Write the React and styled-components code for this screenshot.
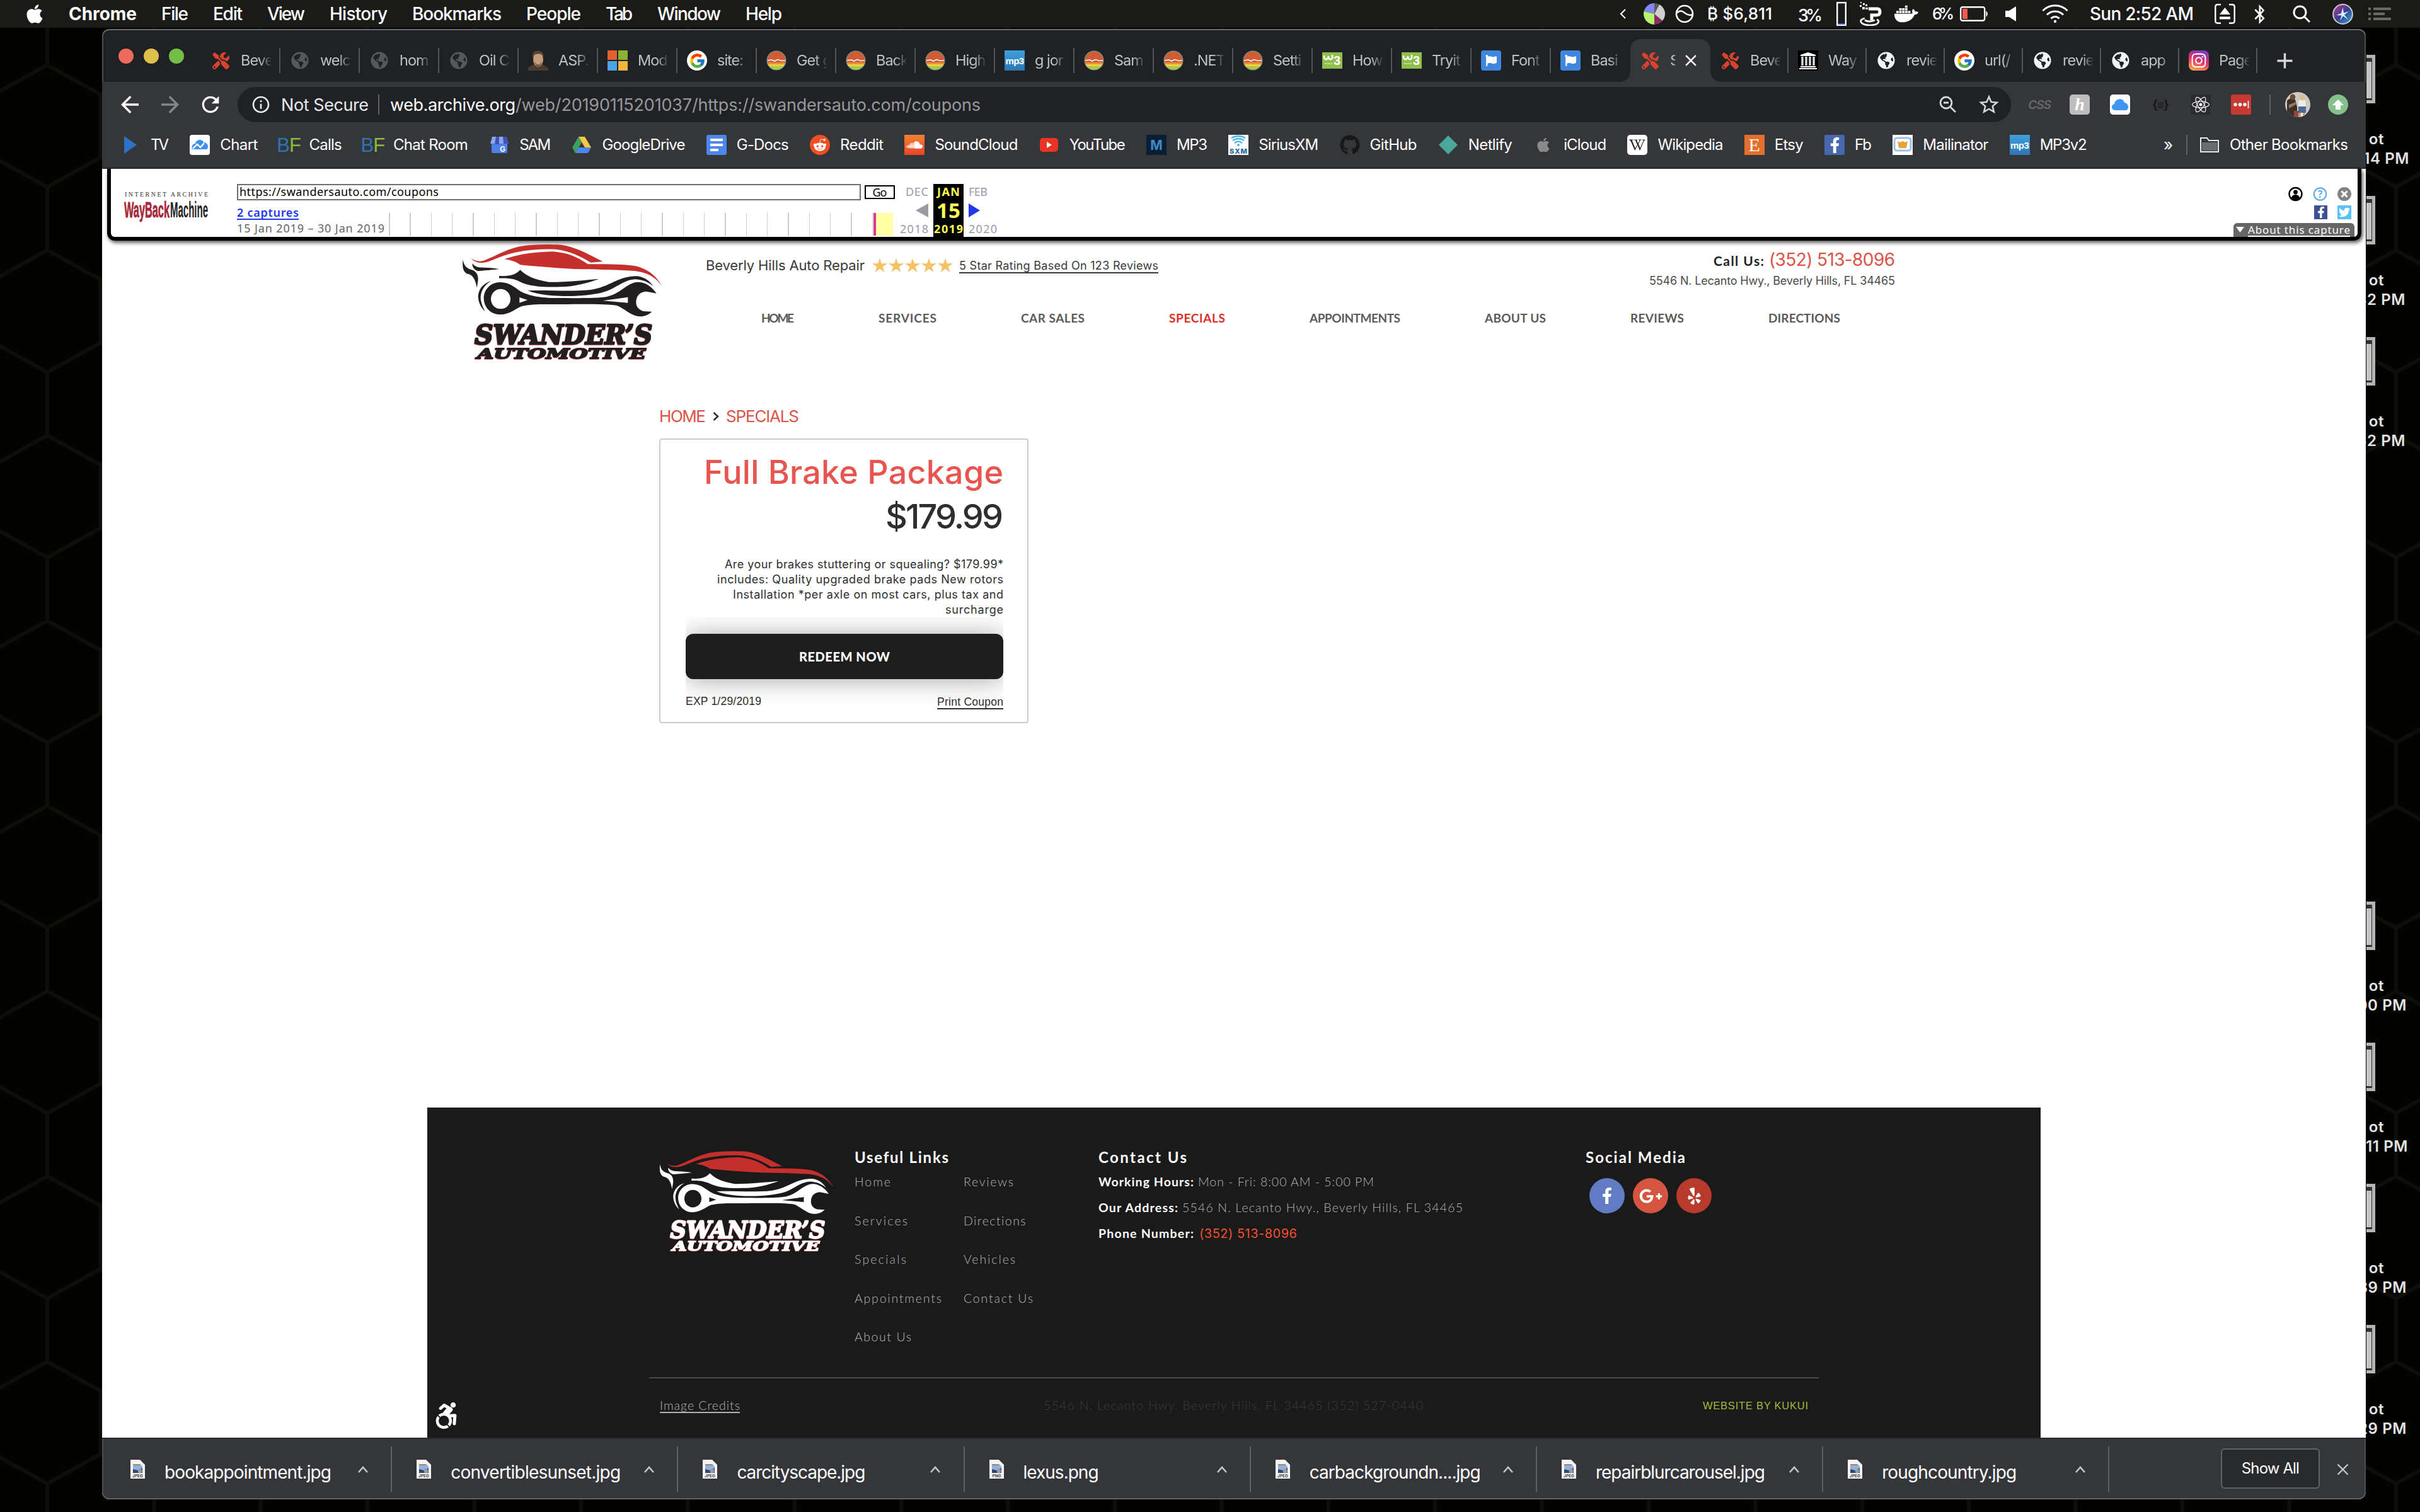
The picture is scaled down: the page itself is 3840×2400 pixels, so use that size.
import React, { useLayoutEffect, useRef, useState } from "react";
import styled, { createGlobalStyle, css } from "styled-components";
import {
  FaApple, FaTools, FaGlobeAmericas, FaRedditAlien, FaSoundcloud, FaGithub,
  FaWikipediaW, FaFacebookF, FaInstagram, FaDocker, FaBluetoothB, FaReact, FaTwitter,
  FaYelp, FaGooglePlusG, FaAccessibleIcon, FaFlag,
} from "react-icons/fa";
import {
  MdArrowBack, MdArrowForward, MdRefresh, MdInfoOutline, MdStarBorder, MdAdd, MdClose,
} from "react-icons/md";
import { FcGoogle } from "react-icons/fc";

const ui = `Inter, Roboto, sans-serif`;
const geo = `Inter, "Open Sans", sans-serif`;
const soft = `Lato, "Open Sans", sans-serif`;
const lucida = `"Noto Sans", "DejaVu Sans", sans-serif`;
const arial = `"Liberation Sans", Arial, sans-serif`;

const Global = createGlobalStyle`
  *, *::before, *::after { box-sizing: border-box; }
  body { margin: 0; background: #000; font-family: ${ui}; }
  svg { display: block; flex: none; }
`;

/* ---------- text ---------- */

const TextBox = styled.span`
  display: inline-block;
  flex: none;
  width: ${(p) => p.$w}px;
  margin-left: ${(p) => p.$ml || 0}px;
  margin-top: ${(p) => p.$mt || 0}px;
  font-family: ${(p) => p.$font || ui};
  font-size: ${(p) => p.$size}px;
  font-weight: ${(p) => p.$weight || 400};
  color: ${(p) => p.$color || "#fff"};
  line-height: ${(p) => p.$line || p.$size}px;
  white-space: pre;
  ${(p) => p.$rule && css`border-bottom: 2px solid currentColor;`}
`;

// A label that tracks its letters so the word fills the given width.
function Label({ children, ...rest }) {
  const ref = useRef(null);
  const [spacing, setSpacing] = useState(0);
  useLayoutEffect(() => {
    const el = ref.current;
    el.style.letterSpacing = "0px";
    const natural = el.getBoundingClientRect().width;
    const next = (rest.$w - natural) / Math.max(1, String(children).length - 1);
    el.style.letterSpacing = `${next}px`;
    setSpacing(next);
  }, [children, rest.$w, rest.$size]);
  return (
    <TextBox {...rest}>
      <span ref={ref} style={{ letterSpacing: `${spacing}px` }}>{children}</span>
    </TextBox>
  );
}

const Slot = styled.div`
  display: flex;
  flex: none;
  align-items: center;
  justify-content: center;
  width: ${(p) => p.$w}px;
  height: ${(p) => p.$h || p.$w}px;
  margin-left: ${(p) => p.$ml || 0}px;
  color: ${(p) => p.$color || "#fff"};
  background: ${(p) => p.$bg || "none"};
  border-radius: ${(p) => p.$r || 0}px;
`;

const Divider = styled.div`
  flex: none;
  width: 2px;
  height: ${(p) => p.$h}px;
  margin-left: ${(p) => p.$ml || 0}px;
  background: #5f6166;
`;

const Spacer = styled.div`flex: 1;`;

/* ---------- desktop ---------- */

const Desktop = styled.div`
  position: relative;
  width: 3840px;
  height: 2400px;
  overflow: hidden;
  background: #030301;
`;
const Wallpaper = styled.svg`
  position: absolute;
  inset: 0;
`;
const Screen = styled.div`
  position: relative;
  display: grid;
  grid-template-rows: 44px 1fr;
  height: 100%;
`;
const MenuBar = styled.div`
  display: flex;
  align-items: center;
  padding: 0 46px 0 42px;
  background: #1a1a19;
`;
const MenuItems = styled.div`
  display: flex;
  align-items: center;
  gap: 39px;
  margin-left: 41px;
`;
const Workspace = styled.div`
  display: grid;
  grid-template-columns: 162px 3592px 86px;
`;
const Files = styled.div`
  padding-top: 43px;
  overflow: hidden;
`;
const FileItem = styled.div`
  height: 224px;
  padding-left: 1px;
  visibility: ${(p) => (p.$empty ? "hidden" : "visible")};
`;
const Thumb = styled.div`
  width: 14px;
  height: 77px;
  margin-bottom: 41px;
  background: #c3c4c4;
  border: 5px solid #b4b5b5;
  border-left: 0;
  box-shadow: inset 0 6px 0 #333, inset 0 -3px 0 #333, inset -1px 0 0 #333;
`;
const FileLabel = styled.div`
  display: flex;
  justify-content: flex-end;
  width: ${(p) => p.$w}px;
  font-size: 24px;
  font-weight: 600;
  letter-spacing: 0.6px;
  line-height: 31px;
  white-space: pre;
  color: #e2e2e2;
`;

/* ---------- browser ---------- */

const Window = styled.div`
  display: flex;
  flex-direction: column;
  width: 3592px;
  height: 2334px;
  margin-top: 2px;
  border-radius: 12px;
  overflow: hidden;
  background: #fff;
`;
const Head = styled.div`
  flex: none;
  height: 222px;
  background: #35363a;
  border-bottom: 2px solid #28292b;
`;
const TabStrip = styled.div`
  display: flex;
  align-items: flex-end;
  height: 84px;
  padding-left: 26px;
  background: #202124;
  border-radius: 12px 12px 0 0;
  box-shadow: inset 0 2px 0 #6a6b6d, inset 2px 0 0 #4b4c4f, inset -2px 0 0 #4b4c4f;
`;
const Lights = styled.div`
  display: flex;
  gap: 16px;
  margin: 0 27px 29px 0;
`;
const Light = styled.i`
  width: 24px;
  height: 24px;
  border-radius: 50%;
  background: ${(p) => p.$c};
`;
const Tab = styled.div`
  position: relative;
  display: flex;
  flex: none;
  align-items: center;
  width: ${(p) => p.$w}px;
  height: 68px;
  padding-left: 15px;
  ${(p) => p.$sep && css`
    background: linear-gradient(#55565a, #55565a) right center / 2px 40px no-repeat;
  `}
  ${(p) => p.$active && css`
    background: #35363a;
    border-radius: 16px 16px 0 0;
    &::before, &::after {
      content: "";
      position: absolute;
      bottom: 0;
      width: 16px;
      height: 16px;
    }
    &::before { left: -16px; background: radial-gradient(circle at 0 0, transparent 15.5px, #35363a 16px); }
    &::after { right: -16px; background: radial-gradient(circle at 100% 0, transparent 15.5px, #35363a 16px); }
  `}
`;
const TabTitle = styled.span`
  width: ${(p) => p.$w || 48}px;
  margin-left: 16px;
  overflow: hidden;
  font-size: 23.5px;
  line-height: 32px;
  letter-spacing: -1px;
  white-space: pre;
  color: #bdc1c6;
  mask-image: linear-gradient(90deg, #000 62%, transparent 104%);
`;
const Toolbar = styled.div`
  display: flex;
  align-items: center;
  height: 72px;
  padding-left: 23px;
`;
const Omnibox = styled.div`
  display: flex;
  align-items: center;
  width: 2814px;
  height: 56px;
  margin-left: 23px;
  padding: 0 16px 0 21px;
  border-radius: 28px;
  background: #202124;
`;
const Url = styled.div`
  display: flex;
  margin-left: 17px;
`;
const Bookmarks = styled.div`
  display: flex;
  align-items: center;
  height: 56px;
  padding: 0 28px 0 29px;
`;
const BookmarkList = styled.div`
  display: flex;
  gap: 33.3px;
`;
const Bookmark = styled.div`
  display: flex;
  align-items: center;
  gap: 16px;
`;
const Mono = styled.span`
  font-family: ${(p) => p.$font || ui};
  font-size: ${(p) => p.$size}px;
  font-weight: ${(p) => p.$weight || 700};
  font-style: ${(p) => p.$style || "normal"};
  letter-spacing: ${(p) => p.$ls || 0}px;
  line-height: 1;
  color: ${(p) => p.$color || "#fff"};
`;

/* ---------- wayback banner ---------- */

const Page = styled.div`
  display: flex;
  flex: 1;
  flex-direction: column;
`;
const Banner = styled.div`
  display: flex;
  flex: none;
  width: 3577px;
  height: 114px;
  margin-left: 8px;
  border: 6px solid #000;
  border-top: 0;
  border-radius: 0 0 12px 12px;
  box-shadow: 2px 3px 6px rgba(0, 0, 0, 0.7);
`;
const BannerLogo = styled.svg`
  margin: 34px 0 0 21px;
`;
const CaptureBlock = styled.div`
  width: 1044px;
  margin-left: 45px;
  padding-top: 24px;
`;
const CaptureRow = styled.div`
  display: flex;
  align-items: center;
  height: 26px;
`;
const UrlField = styled.div`
  display: flex;
  align-items: center;
  width: 990px;
  height: 26px;
  padding-left: 2px;
  border: 2px solid #6e6e6e;
`;
const GoButton = styled.div`
  display: flex;
  align-items: center;
  justify-content: center;
  width: 48px;
  height: 22px;
  margin-left: 6px;
  border: 2px solid #000;
`;
const Timeline = styled.div`
  display: flex;
  margin-top: 8px;
`;
const Captures = styled.div`
  display: grid;
  grid-template-rows: 24px 24px;
  align-items: center;
  width: 241px;
`;
const Sparkline = styled.div`
  display: flex;
  justify-content: flex-end;
  width: 800px;
  height: 36px;
  margin-top: 12px;
  background: repeating-linear-gradient(90deg, #ccc 0 1.5px, transparent 1.5px 33.33px);
`;
const YearMark = styled.i`
  width: 31px;
  border-left: 4px solid #e0358a;
  background: #ffffa5;
`;
const Calendar = styled.div`
  display: grid;
  grid-template-columns: 54px 48px 54px;
  grid-template-rows: 23px 37px 24px;
  height: 84px;
  margin: 24px 0 0 7px;
`;
const Cell = styled.div`
  display: flex;
  align-items: center;
  justify-content: ${(p) => p.$at || "center"};
  padding: 0 8px;
  background: ${(p) => (p.$now ? "#000" : "none")};
`;
const BannerTools = styled.div`
  display: flex;
  flex-direction: column;
  align-items: flex-end;
  margin-right: 5px;
  padding-top: 28px;
`;
const ToolRow = styled.div`
  display: flex;
  align-items: center;
  gap: 16px;
  height: ${(p) => p.$h}px;
  margin-bottom: ${(p) => p.$mb || 0}px;
  padding-right: 5px;
`;
const AboutTab = styled.div`
  display: flex;
  align-items: center;
  width: 192px;
  height: 22px;
  padding-left: 4px;
  border-radius: 6px 6px 0 0;
  background: #666;
`;

/* ---------- site ---------- */

const SiteHeader = styled.header`
  display: flex;
  height: 198px;
  padding: 4px 0 0 562px;
`;
const HeaderBody = styled.div`
  width: 1887px;
  margin-left: 60px;
`;
const HeaderTop = styled.div`
  display: flex;
  justify-content: space-between;
  height: 74px;
`;
const Rating = styled.div`
  display: flex;
  align-items: center;
  height: 70px;
`;
const Stars = styled.div`
  display: flex;
  gap: 2px;
  margin: 0 10px 0 12px;
`;
const CallUs = styled.div`
  display: flex;
  flex-direction: column;
  align-items: flex-end;
  padding-top: 6px;
`;
const CallLine = styled.div`
  display: flex;
  align-items: center;
  height: ${(p) => p.$h}px;
`;
const Nav = styled.nav`
  display: flex;
  align-items: center;
  gap: 134px;
  height: 24px;
  margin: 32px 0 0 88px;
`;
const Crumbs = styled.div`
  display: flex;
  align-items: center;
  gap: 11px;
  height: 30px;
  margin: 66px 0 20px 884px;
`;
const Card = styled.div`
  display: flex;
  flex: none;
  flex-direction: column;
  align-items: flex-end;
  width: 586px;
  height: 452px;
  margin-left: 884px;
  padding: 18px 38px 0 40px;
  border: 2px solid #ccc;
  border-radius: 4px;
`;
const Description = styled.div`
  display: flex;
  flex-direction: column;
  align-items: flex-end;
  margin: 30px 0 26px;
`;
const ButtonWrap = styled.div`
  width: 100%;
  clip-path: inset(-26px 0 -44px 0);
`;
const RedeemButton = styled.div`
  display: flex;
  align-items: center;
  justify-content: center;
  height: 72px;
  border-radius: 12px;
  background: #1e1e1e;
  box-shadow: 0 2px 40px rgba(0, 0, 0, 0.35);
`;
const CardFoot = styled.div`
  display: flex;
  align-items: center;
  justify-content: space-between;
  width: 100%;
  height: 24px;
  margin-top: 24px;
`;

const SiteFooter = styled.footer`
  position: relative;
  display: flex;
  flex-direction: column;
  width: 2560px;
  height: 524px;
  margin: auto 0 0 516px;
  background: #1a1a1a;
`;
const FooterColumns = styled.div`
  display: flex;
  height: 428px;
  padding: 64px 0 0 360px;
`;
const FooterLogo = styled.div`
  padding-top: 3px;
`;
const FooterColumn = styled.div`
  width: ${(p) => p.$w}px;
  margin-left: ${(p) => p.$ml || 0}px;
`;
const Links = styled.div`
  display: grid;
  grid-template-columns: 173px 173px;
  grid-template-rows: repeat(5, 24px);
  grid-auto-flow: column;
  align-items: center;
  row-gap: 37.5px;
  margin-top: 12px;
`;
const ContactLines = styled.div`
  display: flex;
  flex-direction: column;
  gap: 17px;
  margin-top: 12px;
`;
const ContactLine = styled.div`
  display: flex;
  align-items: center;
  height: 24px;
`;
const Social = styled.div`
  display: flex;
  gap: 13px;
  margin: 18px 0 0 6px;
`;
const FooterBase = styled.div`
  display: flex;
  align-items: center;
  width: 1856px;
  height: 88px;
  margin-left: 352px;
  padding: 0 17px;
  border-top: 2px solid #4a4a4a;
`;
const Accessible = styled.div`
  position: absolute;
  left: 9px;
  bottom: 14px;
  color: #fff;
`;

/* ---------- downloads ---------- */

const DownloadBar = styled.div`
  display: flex;
  flex: none;
  align-items: center;
  height: 98px;
  padding-left: 6px;
  background: #35363a;
  border-top: 2px solid #28292b;
  border-radius: 0 0 12px 12px;
  box-shadow: inset 0 -2px 0 #606164, inset 2px 0 0 #4b4c4f, inset -2px 0 0 #4b4c4f;
`;
const Download = styled.div`
  display: flex;
  align-items: center;
  width: 454.2px;
  height: 72px;
  padding-left: 39px;
  border-right: 2px solid #606164;
`;
const DownloadName = styled.div`
  display: flex;
  width: 306px;
  margin: 9px 0 0 31px;
`;
const ShowAll = styled.div`
  display: flex;
  align-items: center;
  justify-content: center;
  width: 157px;
  height: 64px;
  margin: 0 0 2px 177px;
  border: 2px solid #5f6368;
  border-radius: 6px;
  background: #292a2d;
`;

/* ---------- drawings ---------- */

function Hexagons() {
  return (
    <Wallpaper width="3840" height="2400">
      <defs>
        <pattern id="hex" width="169.4" height="294" patternUnits="userSpaceOnUse" x="75" y="103">
          <path
            d="M0 0L84.7 47L169.4 0M84.7 47V147M0 194L84.7 147L169.4 194M0 194V294M169.4 194V294"
            fill="none" stroke="#100e0a" strokeWidth="6"
          />
        </pattern>
      </defs>
      <rect width="3840" height="2400" fill="url(#hex)" />
    </Wallpaper>
  );
}

const LogoWords = styled.g`
  font-family: "DejaVu Serif", "Liberation Serif", serif;
  font-weight: 700;
  font-style: italic;
  stroke-linejoin: round;
  filter: drop-shadow(-1px 2px 0 #d03430);
`;

function CarLogo({ width, height, ink }) {
  return (
    <svg width={width} height={height} viewBox="0 30 1008 582">
      <g fill="#c5302c">
        <path d="M70 103C95 118 112 118 130 113C190 92 230 62 300 46C360 36 420 34 500 38C570 48 620 78 698 118L640 122C590 92 540 68 480 60C420 56 350 60 280 74C220 88 180 108 145 120C115 128 88 122 70 103Z" />
        <path d="M230 106C290 84 360 72 460 70C530 76 570 92 626 130C700 130 780 130 830 136C900 142 950 180 980 236C950 192 910 170 850 162C780 158 680 155 600 154C500 152 400 142 304 133C285 118 265 112 230 106Z" />
      </g>
      <g fill={ink}>
        <path d="M32 108C36 140 52 152 78 158C100 168 104 185 104 205L98 243C92 210 84 188 62 178C36 176 26 150 32 108Z" />
        <path d="M77 127C92 146 110 146 130 146C160 146 185 150 205 153C170 158 130 160 104 163C90 160 74 145 77 127Z" />
        <path d="M204 186C250 188 280 184 304 157C330 184 370 204 440 215C520 216 610 206 680 200C620 222 560 236 500 238C420 240 350 238 300 212C275 200 250 196 204 197Z" />
        <path d="M340 256C430 252 540 262 640 252C730 240 770 186 860 187C900 190 925 215 938 235C912 215 890 204 850 202C790 206 760 250 690 266C600 286 480 286 400 272C375 268 355 262 340 256Z" />
        <path d="M165 211C130 220 104 250 104 285C106 315 118 338 137 354C124 330 116 310 116 285C118 255 135 228 165 211Z" />
        <path
          fillRule="evenodd"
          d="M208 216C240 216 262 228 290 248C330 280 400 291 480 291C580 292 680 292 720 284C780 270 800 232 850 217C890 208 930 235 953 269L905 260C870 262 856 285 856 312C856 332 868 346 890 354L931 356C915 372 895 379 872 379C830 376 800 340 765 327C700 318 600 321 500 321C430 321 360 318 312 330C280 342 255 370 208 370C165 370 131 336 131 292C131 250 165 216 208 216ZM211 248C185 248 165 269 165 296C165 322 185 343 211 343C238 343 258 322 258 296C258 269 238 248 211 248ZM301 288L339 301L301 314ZM817 287L698 304L817 314Z"
        />
      </g>
      <LogoWords fill={ink} stroke={ink}>
        <text x="88" y="511" fontSize="128" textLength="846" lengthAdjust="spacingAndGlyphs" strokeWidth="8">SWANDER’S</text>
        <text x="100" y="580" fontSize="69" textLength="802" lengthAdjust="spacingAndGlyphs" strokeWidth="5.5">AUTOMOTIVE</text>
      </LogoWords>
    </svg>
  );
}

const Sunset = () => (
  <svg width="32" height="32" viewBox="0 0 32 32">
    <defs><clipPath id="sun"><circle cx="16" cy="16" r="14.5" /></clipPath></defs>
    <circle cx="16" cy="16" r="15.5" fill="#6e9f9a" />
    <g clipPath="url(#sun)">
      <rect width="32" height="32" fill="#cf5c35" />
      <rect y="19" width="32" height="3" fill="#e6903c" />
      <rect y="22" width="32" height="3" fill="#f4d03f" />
      <rect y="25" width="32" height="7" fill="#a9c94b" />
      <path d="M2 16L9 15L13 17L18 14.5L24 16.5L30 16" stroke="#fff" strokeWidth="1.6" fill="none" />
    </g>
  </svg>
);
const Portrait = () => (
  <svg width="32" height="32" viewBox="0 0 32 32">
    <path d="M0 32V27L9 22L22 22L32 28V32Z" fill="#4b3c31" />
    <ellipse cx="16" cy="14" rx="8" ry="12" fill="#c59c7c" />
    <path d="M7 12C6 2 11 0 17 1C23 1 26 6 24 13L22 7C18 5 13 5 9 8Z" fill="#5c4330" />
    <path d="M10 17Q16 28 22 17Q20 27 16 27Q12 27 10 17Z" fill="#7b5a45" />
  </svg>
);
const Squares = () => (
  <svg width="32" height="32">
    <rect width="15" height="15" fill="#e3602f" /><rect x="17" width="15" height="15" fill="#8bb331" />
    <rect y="17" width="15" height="15" fill="#4da3e8" /><rect x="17" y="17" width="15" height="15" fill="#f0b53c" />
  </svg>
);
const Temple = () => (
  <svg width="32" height="32" viewBox="0 0 32 32">
    <rect width="32" height="32" fill="#000" />
    <path d="M4 7L16 3L28 7V9H4ZM4 25H28V27H4ZM2 28H30V30H2Z" fill="#fff" />
    <path d="M7 10V24M13 10V24M19 10V24M25 10V24" stroke="#ddd" strokeWidth="3.4" />
  </svg>
);
const Drive = () => (
  <svg width="32" height="32" viewBox="0 0 32 32">
    <path d="M11 3L21 3L31 20L21 20Z" fill="#f6c944" />
    <path d="M11 3L16 12L6 29L1 20Z" fill="#3f9f5c" />
    <path d="M11 20L31 20L26 29L6 29Z" fill="#4d86ec" />
  </svg>
);
const Docs = () => (
  <svg width="32" height="32">
    <rect width="32" height="32" rx="3" fill="#4d86ec" />
    <path d="M6 8H26M6 16H26M6 24H19" stroke="#fff" strokeWidth="4" />
  </svg>
);
const Shop = () => (
  <svg width="32" height="32">
    <rect x="4" y="12" width="25" height="17" rx="2" fill="#4d7fe6" />
    <path d="M5 3H28L31 14H2Z" fill="#88a7f1" />
    <path d="M11 3H16V15H9ZM22 3H28L31 14H23Z" fill="#4351b0" />
    <text x="17" y="27" fontSize="12" fontWeight="700" fill="#fff" fontFamily="Inter, sans-serif">G</text>
  </svg>
);
const ChartIcon = () => (
  <svg width="32" height="32">
    <rect width="32" height="32" rx="4" fill="#fff" />
    <path d="M4 23C2 17 6 14 9 14C10 7 20 6 22 12C29 12 31 20 27 23Z" fill="#3d8ff0" />
    <path d="M5 22L12 15L17 20L23 13" stroke="#fff" strokeWidth="2.4" fill="none" />
  </svg>
);
const Bf = () => (
  <Slot $w={32}><Mono $size={31} $weight={400} $color="#3173b7" $ls={-1} $font={arial}>B</Mono><Mono $size={31} $weight={400} $color="#8abb3f" $font={arial}>F</Mono></Slot>
);
const Mp3 = () => (
  <Slot $w={32} $bg="linear-gradient(#3fa0dc, #2c77b4)"><Mono $size={15} $ls={-0.6} $font={arial}>mp3</Mono></Slot>
);
const W3 = () => (
  <svg width="32" height="26">
    <rect width="32" height="26" fill="#8fbf4b" />
    <path d="M3 6Q3 12 7 11Q10 10 10 6Q10 12 14 11Q17 10 16 5" fill="none" stroke="#fff" strokeWidth="2.6" strokeLinecap="round" />
    <text x="18" y="20" fontSize="20" fill="#fff" fontWeight="700" fontFamily="Liberation Sans, sans-serif">3</text>
    <path d="M4 18H16" stroke="#d9ebc0" strokeWidth="2" strokeDasharray="1.5 1" />
  </svg>
);
const FlagIcon = () => <Slot $w={32} $bg="#3f87de" $r={4}><FaFlag size={18} /></Slot>;
const Goog = () => <Slot $w={32} $bg="#fff" $r={16}><FcGoogle size={27} /></Slot>;
const Tools = () => <Slot $w={32} $color="#d8432e"><FaTools size={27} /></Slot>;
const Globe = ({ c }) => <Slot $w={32} $color={c}><FaGlobeAmericas size={28} /></Slot>;
const Insta = () => (
  <Slot $w={32} $r={8} $bg="linear-gradient(20deg, #fcb045 5%, #e1306c 50%, #6a3fc9 95%)"><FaInstagram size={26} /></Slot>
);
const Sirius = () => (
  <Slot $w={32} $bg="#fff">
    <svg width="32" height="32">
      <path d="M5 5Q16 -1 27 5M7 9Q16 3 25 9M10 13Q16 8 22 13" stroke="#52b4e4" strokeWidth="2.6" fill="none" />
      <circle cx="16" cy="16" r="2" fill="#52b4e4" />
      <text x="2" y="30" fontSize="11" fontWeight="800" fill="#24689b" fontFamily="Inter, sans-serif" textLength="28">SXM</text>
    </svg>
  </Slot>
);
const Mail = () => (
  <svg width="32" height="32">
    <rect width="32" height="32" fill="#fff" />
    <rect x="3" y="5" width="26" height="20" rx="4" fill="none" stroke="#9fc0e6" strokeWidth="3" />
    <path d="M8 10L12 12L16 10L20 12L24 10L22 21H10Z" fill="#e2a23c" />
  </svg>
);
const Folder = () => (
  <svg width="32" height="26" viewBox="0 0 32 26">
    <path d="M2 24V2H12L15 6H30V24Z" fill="none" stroke="#e8eaed" strokeWidth="2" />
    <rect x="4" y="9" width="24" height="13" fill="#6b6c70" />
  </svg>
);
const JpegFile = ({ kind }) => (
  <svg width="23" height="30" viewBox="0 0 23 30">
    <path d="M0 0H15L23 8V30H0Z" fill="#f4f4f4" />
    <path d="M4 7H16L19 11V21H4Z" fill="#8fb2e0" />
    <path d="M4 15L12 17L19 13V21H4Z" fill="#31456f" />
    <circle cx="15" cy="18" r="3.4" fill="#9b9a98" />
    <path d="M4 7H15V9H4Z" fill="#a48762" />
    <text x="11.5" y="28" fontSize="6.5" fontWeight="700" textAnchor="middle" fill="#444" fontFamily="Inter, sans-serif">{kind}</text>
  </svg>
);
const Star = () => (
  <svg width="24" height="22" viewBox="0 0 24 22">
    <path d="M12 0L14.8 8.3H24L16.6 13.4L19.4 22L12 16.8L4.6 22L7.4 13.4L0 8.3H9.2Z" fill="#f5c165" />
  </svg>
);
const Chevron = () => (
  <svg width="18" height="12" viewBox="0 0 18 12"><path d="M2 11L9 3L16 11" fill="none" stroke="#c5c7ca" strokeWidth="2.6" /></svg>
);
const Wheel = () => (
  <svg width="34" height="34" viewBox="-17 -17 34 34">
    <path d="M0 0L0 -17A17 17 0 0 0 -16.5 -4Z" fill="#8486f5" />
    <path d="M0 0L-16.5 -4A17 17 0 0 0 0 17Z" fill="#b6f66b" />
    <path d="M0 0L0 17A17 17 0 0 0 13 11Z" fill="#8a2c63" />
    <path d="M0 0L13 11A17 17 0 0 0 8 -15Z" fill="#cfcfcf" />
    <path d="M0 0L8 -15A17 17 0 0 0 0 -17Z" fill="#5b5b5b" />
  </svg>
);
const Ring = () => (
  <svg width="30" height="30" viewBox="0 0 30 30" fill="none" stroke="#fff" strokeWidth="2.6">
    <circle cx="15" cy="15" r="13" /><path d="M2 14C9 8 12 11 16 14S24 18 28 16" />
  </svg>
);
const Memory = () => (
  <svg width="16" height="38">
    <rect x="1.2" y="1.2" width="13.6" height="35.6" fill="none" stroke="#fff" strokeWidth="2.4" />
    <rect x="3" y="34" width="10" height="2" fill="#3f5cff" />
  </svg>
);
const Cup = () => (
  <svg width="36" height="38" viewBox="0 0 36 38">
    <path d="M2 0H4V2H2ZM6 2H9V5H6ZM1 5H4V8H1ZM10 4H13V7H10ZM5 8H9V12H5ZM10 9H14V12H10Z" fill="#fff" />
    <path d="M15 11H29Q33 11 33 16Q33 21 27 21H20V29" fill="none" stroke="#fff" strokeWidth="5" />
    <path d="M9 26Q1 28 3 32Q6 37 17 37Q30 37 31 31Q31 29 28 28" fill="none" stroke="#fff" strokeWidth="2.6" />
    <path d="M9 29Q16 33 25 29" fill="none" stroke="#fff" strokeWidth="3" />
  </svg>
);
const Battery = () => (
  <svg width="46" height="24" viewBox="0 0 46 24">
    <rect x="1.2" y="1.2" width="38" height="21.6" rx="3" fill="none" stroke="#fff" strokeWidth="2.4" />
    <rect x="4" y="4" width="8" height="16" fill="#f65a4c" />
    <path d="M42 8Q45 12 42 16Z" fill="#fff" stroke="#fff" />
  </svg>
);
const Volume = () => <svg width="17" height="24"><path d="M0 7H6L17 0V24L6 17H0Z" fill="#fff" /></svg>;
const Wifi = () => (
  <svg width="42" height="30" viewBox="0 0 42 30" fill="none" stroke="#fff" strokeWidth="3">
    <path d="M1.5 10C12 -1 30 -1 40.5 10M8 16.5C15 9 27 9 34 16.5M14.5 22.5C18 18.5 24 18.5 27.5 22.5" />
    <circle cx="21" cy="27" r="2.2" fill="#fff" stroke="none" />
  </svg>
);
const Eject = () => (
  <svg width="33" height="32" viewBox="0 0 33 32">
    <path d="M10 1.3H5Q1.3 1.3 1.3 5V27Q1.3 30.7 5 30.7H10M23 1.3H28Q31.7 1.3 31.7 5V27Q31.7 30.7 28 30.7H23" fill="none" stroke="#fff" strokeWidth="2.4" />
    <path d="M16.5 6L25 17H8ZM8 20.5H25V24.5H8Z" fill="#fff" />
  </svg>
);
const Search = () => (
  <svg width="29" height="29" fill="none" stroke="#fff" strokeWidth="3"><circle cx="11.5" cy="11.5" r="9.5" /><path d="M18.5 18.5L27 27" /></svg>
);
const ZoomOut = () => (
  <svg width="28" height="28" fill="none" stroke="#d5d7da" strokeWidth="2.8">
    <circle cx="11" cy="11" r="9" /><path d="M17.5 17.5L26 26M7 11H15" />
  </svg>
);
const Siri = () => (
  <svg width="33" height="33" viewBox="0 0 33 33">
    <defs>
      <linearGradient id="siri" x1="0" y1="0" x2="1" y2="1">
        <stop offset="0" stopColor="#c23a8b" /><stop offset=".5" stopColor="#3b3c8f" /><stop offset="1" stopColor="#2eb4dc" />
      </linearGradient>
    </defs>
    <circle cx="16.5" cy="16.5" r="15.4" fill="url(#siri)" stroke="#c9c9d2" strokeWidth="2" />
    <path d="M16.5 6L18 14.5L26 12L19 17.5L25 25L17 19.5L12 27L14.5 18.5L6 18L14 15Z" fill="#d8efff" />
  </svg>
);
const Lines = () => (
  <svg width="36" height="20" fill="#6a6a69">
    <rect width="4" height="4" /><rect x="8" width="28" height="4" /><rect y="8" width="4" height="4" /><rect x="8" y="8" width="18" height="4" />
    <rect y="16" width="4" height="4" /><rect x="8" y="16" width="28" height="4" />
  </svg>
);
const Avatar = () => (
  <svg width="40" height="40" viewBox="0 0 40 40">
    <defs><clipPath id="av"><circle cx="20" cy="20" r="20" /></clipPath></defs>
    <g clipPath="url(#av)">
      <rect width="40" height="40" fill="#cfc9c3" />
      <path d="M3 40V14Q9 7 16 12L19 24V40Z" fill="#3c3029" /><circle cx="12" cy="8" r="4.4" fill="#6a4b38" />
      <path d="M6 20L17 16V20L6 26Z" fill="#8d7a68" />
      <path d="M21 40V15Q26 8 32 14L33 26V40Z" fill="#f0ece6" /><path d="M21 23H33V33H21Z" fill="#4a6a9b" />
      <circle cx="27" cy="9" r="4.5" fill="#d9bf93" /><rect x="14" y="30" width="8" height="10" fill="#8c4a3d" />
      <path d="M23 33V40M30 33V40" stroke="#c79b7c" strokeWidth="4" />
    </g>
  </svg>
);
const Person = () => (
  <svg width="23" height="24" viewBox="0 0 23 24">
    <circle cx="11.5" cy="12" r="10" fill="#fff" stroke="#000" strokeWidth="2.4" />
    <circle cx="11.5" cy="9" r="3.4" /><path d="M5 19C5 11 18 11 18 19L11.5 22Z" />
  </svg>
);

/* ---------- data ---------- */

const menus = [
  ["Chrome", 108, 700], ["File", 43], ["Edit", 47], ["View", 60], ["History", 92], ["Bookmarks", 142],
  ["People", 87], ["Tab", 43], ["Window", 101], ["Help", 58],
];
const dim = "#56585c";
const lit = "#f1f3f4";
const tabsBefore = [
  ["Beve", <Tools />], ["welc", <Globe c={dim} />], ["hom", <Globe c={dim} />], ["Oil C", <Globe c={dim} />],
  ["ASP.", <Portrait />], ["Mod", <Squares />], ["site: ", <Goog />], ["Get g", <Sunset />], ["Back", <Sunset />],
  ["High", <Sunset />], ["g jor", <Mp3 />], ["Sam", <Sunset />], [".NET", <Sunset />], ["Setti", <Sunset />],
  ["How", <W3 />], ["Tryit", <W3 />], ["Font", <FlagIcon />], ["Basi", <FlagIcon />],
];
const tabsAfter = [
  ["Beve", <Tools />], ["Way", <Temple />], ["revie", <Globe c={lit} />], ["url(/", <Goog />],
  ["revie", <Globe c={lit} />], ["app", <Globe c={lit} />], ["Page", <Insta />],
];
const bookmarks = [
  ["TV", 29, <Slot $w={32}><svg width="20" height="28"><path d="M0 0L20 14L0 28Z" fill="#2b74c4" /></svg></Slot>],
  ["Chart", 60, <ChartIcon />],
  ["Calls", 52, <Bf />],
  ["Chat Room", 119, <Bf />],
  ["SAM", 50, <Shop />],
  ["GoogleDrive", 132, <Drive />],
  ["G-Docs", 83, <Docs />],
  ["Reddit", 69, <Slot $w={32} $r={16} $bg="#ee4f25"><FaRedditAlien size={22} /></Slot>],
  ["SoundCloud", 132, <Slot $w={32} $bg="linear-gradient(#f28332, #e9432a)"><FaSoundcloud size={26} /></Slot>],
  ["YouTube", 89, <Slot $w={32}><svg width="29" height="22"><rect width="29" height="22" rx="5" fill="#e93323" /><path d="M11 6L19 11L11 16Z" fill="#fff" /></svg></Slot>],
  ["MP3", 49, <Slot $w={32} $bg="#0b1d30"><Mono $size={21} $color="#3d8ad0">M</Mono></Slot>],
  ["SiriusXM", 95, <Sirius />],
  ["GitHub", 75, <Slot $w={32} $color="#191717"><FaGithub size={32} /></Slot>],
  ["Netlify", 70, <svg width="32" height="32"><path d="M16 1L31 16L16 31L1 16Z" fill="#4aa79c" /></svg>],
  ["iCloud", 68, <Slot $w={32} $color="#8a8a8a"><FaApple size={26} /></Slot>],
  ["Wikipedia", 104, <Slot $w={32} $bg="#fff" $r={5} $color="#222"><FaWikipediaW size={26} /></Slot>],
  ["Etsy", 46, <Slot $w={32} $bg="#e46f2c"><Mono $size={30} $weight={400} $font={`"Liberation Serif", serif`}>E</Mono></Slot>],
  ["Fb", 27, <Slot $w={32} $bg="#4767ae" $r={2}><FaFacebookF size={25} /></Slot>],
  ["Mailinator", 104, <Mail />],
  ["MP3v2", 75, <Mp3 />],
];
const nav = [
  ["HOME", 52], ["SERVICES", 92], ["CAR SALES", 101], ["SPECIALS", 89], ["APPOINTMENTS", 144],
  ["ABOUT US", 97], ["REVIEWS", 85], ["DIRECTIONS", 114],
];
const links = [
  ["Home", 57], ["Services", 84], ["Specials", 82], ["Appointments", 138], ["About Us", 90],
  ["Reviews", 79], ["Directions", 99], ["Vehicles", 82], ["Contact Us", 110],
];
const downloads = [
  ["bookappointment.jpg", 265], ["convertiblesunset.jpg", 270], ["carcityscape.jpg", 204], ["lexus.png", 120],
  ["carbackgroundn....jpg", 272], ["repairblurcarousel.jpg", 269], ["roughcountry.jpg", 214],
];
const files = [["14 PM", 68], ["42 PM", 62], ["52 PM", 62], null, null, null, ["00 PM", 64], ["11 PM", 66], ["39 PM", 64], ["29 PM", 64]];

/* ---------- sections ---------- */

function TopMenu() {
  return (
    <MenuBar>
      <Slot $w={26} $h={36}><FaApple size={34} /></Slot>
      <MenuItems>
        {menus.map(([t, w, b]) => <Label key={t} $size={28} $w={w} $weight={b || 500}>{t}</Label>)}
      </MenuItems>
      <Spacer />
      <svg width="10" height="16"><path d="M9 1L2 8L9 15" fill="none" stroke="#fff" strokeWidth="2" /></svg>
      <Slot $w={34} $ml={28}><Wheel /></Slot>
      <Slot $w={30} $ml={16}><Ring /></Slot>
      <Label $ml={21} $w={103} $size={26} $weight={500}>₿ $6,811</Label>
      <Label $ml={41} $w={39} $mt={4} $size={27} $weight={500}>3%</Label>
      <Slot $w={16} $h={38} $ml={22}><Memory /></Slot>
      <Slot $w={36} $ml={20}><Cup /></Slot>
      <Slot $w={36} $ml={21}><FaDocker size={38} /></Slot>
      <Label $ml={23} $w={35} $size={25} $weight={500}>6%</Label>
      <Slot $w={46} $h={24} $ml={9}><Battery /></Slot>
      <Slot $w={17} $h={24} $ml={26}><Volume /></Slot>
      <Slot $w={42} $h={30} $ml={41}><Wifi /></Slot>
      <Label $ml={34} $w={165} $size={28} $weight={500}>Sun 2:52 AM</Label>
      <Slot $w={33} $ml={33}><Eject /></Slot>
      <Slot $w={18} $h={32} $ml={29}><FaBluetoothB size={31} /></Slot>
      <Slot $w={29} $ml={44}><Search /></Slot>
      <Slot $w={33} $ml={34}><Siri /></Slot>
      <Slot $w={36} $h={20} $ml={24}><Lines /></Slot>
    </MenuBar>
  );
}

function BrowserHead() {
  return (
    <Head>
      <TabStrip>
        <Lights><Light $c="#ec6a5e" /><Light $c="#e0c04c" /><Light $c="#71bf46" /></Lights>
        {tabsBefore.map(([t, icon], i) => (
          <Tab key={i} $w={126} $sep={i < tabsBefore.length - 1}>{icon}<TabTitle>{t}</TabTitle></Tab>
        ))}
        <Tab $w={127} $active>
          <Tools />
          <TabTitle $w={9}>S</TabTitle>
          <Slot $w={30} $ml={9}><MdClose size={30} /></Slot>
        </Tab>
        {tabsAfter.map(([t, icon], i) => (
          <Tab key={i} $w={124} $sep>{icon}<TabTitle>{t}</TabTitle></Tab>
        ))}
        <Slot $w={41} $h={68} $ml={23} $color="#d5d7da"><MdAdd size={41} /></Slot>
      </TabStrip>
      <Toolbar>
        <Slot $w={42}><MdArrowBack size={42} /></Slot>
        <Slot $w={42} $ml={22} $color="#84868a"><MdArrowForward size={42} /></Slot>
        <Slot $w={40} $ml={23}><MdRefresh size={40} /></Slot>
        <Omnibox>
          <Slot $w={32} $color="#e8eaed"><MdInfoOutline size={32} /></Slot>
          <Label $ml={16} $w={139} $size={27} $color="#e8eaed">Not Secure</Label>
          <Divider $h={32} $ml={15} />
          <Url>
            <Label $w={199} $size={27}>web.archive.org</Label>
            <Label $w={738} $size={27} $color="#96989c">/web/20190115201037/https://swandersauto.com/coupons</Label>
          </Url>
          <Spacer />
          <Slot $w={28}><ZoomOut /></Slot>
          <Slot $w={38} $ml={32} $color="#d5d7da"><MdStarBorder size={38} /></Slot>
        </Omnibox>
        <Slot $w={32} $ml={29}><Mono $size={19} $weight={600} $style="italic" $ls={-1} $color="#66686c">CSS</Mono></Slot>
        <Slot $w={32} $ml={32} $bg="#bdbdbd" $r={5}><Mono $size={28} $style="italic" $font={`"Liberation Serif", serif`}>h</Mono></Slot>
        <Slot $w={32} $ml={32} $bg="#fff" $r={5}>
          <svg width="28" height="20"><path d="M6 19C-1 18 0 10 5 9C6 0 19 -2 21 7C29 8 29 19 22 19Z" fill="#3f97f5" /></svg>
        </Slot>
        <Slot $w={32} $ml={32}><Mono $size={19} $ls={-1} $color="#17181a">{"{≡}"}</Mono></Slot>
        <Slot $w={32} $ml={32} $bg="#2b2c2f"><FaReact size={28} /></Slot>
        <Slot $w={32} $ml={32} $bg="#c63a31" $r={3}>
          <svg width="28" height="12"><circle cx="5" cy="6" r="2.8" fill="#fff" /><circle cx="12.5" cy="6" r="2.8" fill="#fff" /><circle cx="20" cy="6" r="2.8" fill="#fff" /><path d="M25.5 0V12" stroke="#fff" strokeWidth="1.6" /></svg>
        </Slot>
        <Divider $h={32} $ml={29} />
        <Slot $w={40} $ml={23}><Avatar /></Slot>
        <Slot $w={32} $ml={28} $bg="#86c18d" $r={16}>
          <svg width="20" height="18"><path d="M10 1L19 10H14V17H6V10H1Z" fill="#fff" /></svg>
        </Slot>
      </Toolbar>
      <Bookmarks>
        <BookmarkList>
          {bookmarks.map(([t, w, icon]) => (
            <Bookmark key={t}>{icon}<Label $size={24} $w={w}>{t}</Label></Bookmark>
          ))}
        </BookmarkList>
        <Spacer />
        <Label $size={26} $w={14}>»</Label>
        <Divider $h={32} $ml={22} />
        <Slot $w={32} $h={26} $ml={19}><Folder /></Slot>
        <Label $ml={16} $w={188} $size={24}>Other Bookmarks</Label>
      </Bookmarks>
    </Head>
  );
}

function WaybackBanner() {
  const gray = "#9a9aab";
  return (
    <Banner>
      <BannerLogo width="134" height="56" viewBox="0 0 134 56">
        <text x="1" y="10" fontSize="10" fill="#333" fontFamily="Liberation Serif, serif" textLength="132">INTERNET ARCHIVE</text>
        <text x="0" y="43" fontSize="35" fontWeight="700" fill="#a5283c" stroke="#a5283c" strokeWidth="0.8" fontFamily="Liberation Sans, sans-serif" textLength="72" lengthAdjust="spacingAndGlyphs">WayBack</text>
        <text x="73" y="43" fontSize="35" fontWeight="700" fill="#222" fontFamily="Liberation Sans, sans-serif" textLength="60" lengthAdjust="spacingAndGlyphs">Machine</text>
      </BannerLogo>
      <CaptureBlock>
        <CaptureRow>
          <UrlField><Label $font={lucida} $size={18} $w={316} $mt={-2} $color="#000">https://swandersauto.com/coupons</Label></UrlField>
          <GoButton><Label $font={lucida} $size={18} $w={23} $color="#000">Go</Label></GoButton>
        </CaptureRow>
        <Timeline>
          <Captures>
            <Label $font={lucida} $size={18} $w={98} $line={20} $weight={600} $color="#2337ef" $rule>2 captures</Label>
            <Label $font={lucida} $size={18} $w={234} $color="#666">15 Jan 2019 – 30 Jan 2019</Label>
          </Captures>
          <Sparkline><YearMark /></Sparkline>
        </Timeline>
      </CaptureBlock>
      <Calendar>
        <Cell $at="flex-end"><Label $font={lucida} $size={18} $w={36} $color={gray}>DEC</Label></Cell>
        <Cell $now><Label $font={lucida} $size={18} $w={36} $weight={700} $color="#ffff55">JAN</Label></Cell>
        <Cell $at="flex-start"><Label $font={lucida} $size={18} $w={30} $color={gray}>FEB</Label></Cell>
        <Cell $at="flex-end"><svg width="20" height="22"><path d="M20 0L0 11L20 22Z" fill="#9a9aa0" /></svg></Cell>
        <Cell $now><Label $font={lucida} $size={33} $w={38} $weight={700} $color="#ffff55">15</Label></Cell>
        <Cell $at="flex-start"><svg width="18" height="22"><path d="M0 0L18 11L0 22Z" fill="#2337ef" /></svg></Cell>
        <Cell $at="flex-end"><Label $font={lucida} $size={18} $w={45} $mt={-2} $color={gray}>2018</Label></Cell>
        <Cell $now><Label $font={lucida} $size={18} $w={46} $mt={-2} $weight={700} $color="#ffff55">2019</Label></Cell>
        <Cell $at="flex-start"><Label $font={lucida} $size={18} $w={45} $mt={-2} $color={gray}>2020</Label></Cell>
      </Calendar>
      <Spacer />
      <BannerTools>
        <ToolRow $h={24} $mb={6}>
          <Person />
          <svg width="23" height="22" viewBox="0 0 23 22">
            <circle cx="11.5" cy="11" r="9.7" fill="#fff" stroke="#5fb0e8" strokeWidth="2.2" />
            <text x="11.5" y="17" fontSize="16" fontWeight="700" textAnchor="middle" fill="#5fb0e8" fontFamily="Noto Sans, sans-serif">?</text>
          </svg>
          <svg width="22" height="22"><circle cx="11" cy="11" r="11" fill="#858585" /><path d="M6.5 6.5L15.5 15.5M15.5 6.5L6.5 15.5" stroke="#fff" strokeWidth="3" /></svg>
        </ToolRow>
        <ToolRow $h={22} $mb={6}>
          <Slot $w={21} $h={22} $bg="#3c5193"><FaFacebookF size={18} /></Slot>
          <Slot $w={22} $bg="#5bc0f5"><FaTwitter size={18} /></Slot>
        </ToolRow>
        <AboutTab>
          <svg width="13" height="10"><path d="M0 0H13L6.5 9Z" fill="#fff" /></svg>
          <Label $ml={6} $w={162} $font={lucida} $size={17} $line={19} $rule>About this capture</Label>
        </AboutTab>
      </BannerTools>
    </Banner>
  );
}

function Site() {
  const text = "#2e2e2e";
  return (
    <>
      <SiteHeader>
        <CarLogo width={336} height={194} ink="#231f20" />
        <HeaderBody>
          <HeaderTop>
            <Rating>
              <Label $font={geo} $size={22} $w={252} $color="#3a3a3a">Beverly Hills Auto Repair</Label>
              <Stars>{[0, 1, 2, 3, 4].map((i) => <Star key={i} />)}</Stars>
              <Label $font={geo} $size={18} $w={316} $line={21} $mt={2} $color="#3a3a3a" $rule>5 Star Rating Based On 123 Reviews</Label>
            </Rating>
            <CallUs>
              <CallLine $h={40}>
                <Label $font={soft} $size={21} $w={80} $weight={700} $mt={3} $color="#222">Call Us:</Label>
                <Label $ml={8} $font={geo} $size={28} $w={200} $color="#dc5349">(352) 513-8096</Label>
              </CallLine>
              <CallLine $h={27}>
                <Label $font={geo} $size={18} $w={390} $color="#4c4c4c">5546 N. Lecanto Hwy., Beverly Hills, FL 34465</Label>
              </CallLine>
            </CallUs>
          </HeaderTop>
          <Nav>
            {nav.map(([t, w]) => (
              <Label key={t} $font={soft} $size={19} $w={w} $weight={700} $color={t === "SPECIALS" ? "#db2f2a" : "#5a5a5a"}>{t}</Label>
            ))}
          </Nav>
        </HeaderBody>
      </SiteHeader>
      <Crumbs>
        <Label $font={geo} $size={26} $w={74} $color="#dc5349">HOME</Label>
        <svg width="10" height="14"><path d="M1.5 1L8 7L1.5 13" fill="none" stroke="#2d3040" strokeWidth="2.6" /></svg>
        <Label $font={geo} $size={26} $w={116} $color="#dc5349">SPECIALS</Label>
      </Crumbs>
      <Card>
        <Label $font={geo} $size={52} $w={475} $line={68} $weight={500} $color="#e8544f">Full Brake Package</Label>
        <Label $font={geo} $size={54} $w={187} $line={68} $mt={2} $weight={500} $color={text}>$179.99</Label>
        <Description>
          <Label $font={geo} $size={18} $w={442} $line={24} $color={text}>Are your brakes stuttering or squealing? $179.99*</Label>
          <Label $font={geo} $size={18} $w={454} $line={24} $color={text}>includes: Quality upgraded brake pads New rotors</Label>
          <Label $font={geo} $size={18} $w={429} $line={24} $color={text}>Installation *per axle on most cars, plus tax and</Label>
          <Label $font={geo} $size={18} $w={92} $line={24} $color={text}>surcharge</Label>
        </Description>
        <ButtonWrap>
          <RedeemButton><Label $font={soft} $size={20} $w={144} $weight={900}>REDEEM NOW</Label></RedeemButton>
        </ButtonWrap>
        <CardFoot>
          <Label $font={arial} $size={17.5} $w={120} $color={text}>EXP 1/29/2019</Label>
          <Label $font={arial} $size={17.5} $w={105} $line={20} $mt={2} $color={text} $rule>Print Coupon</Label>
        </CardFoot>
      </Card>
    </>
  );
}

function Footer() {
  const thin = { $font: soft, $size: 19.5, $weight: 300, $color: "#b4b4b4" };
  const bold = { $font: soft, $size: 19.5, $weight: 700, $color: "#fff" };
  const head = { $font: soft, $size: 24, $weight: 700, $line: 30 };
  return (
    <SiteFooter>
      <FooterColumns>
        <FooterLogo><CarLogo width={293} height={170} ink="#fff" /></FooterLogo>
        <FooterColumn $w={387} $ml={25}>
          <Label {...head} $w={149}>Useful Links</Label>
          <Links>{links.map(([t, w]) => <Label key={t} {...thin} $w={w}>{t}</Label>)}</Links>
        </FooterColumn>
        <FooterColumn $w={773}>
          <Label {...head} $w={140}>Contact Us</Label>
          <ContactLines>
            <ContactLine><Label {...bold} $w={151}>Working Hours:</Label><Label {...thin} $ml={7} $w={279}>Mon - Fri: 8:00 AM - 5:00 PM</Label></ContactLine>
            <ContactLine><Label {...bold} $w={126}>Our Address:</Label><Label {...thin} $ml={7} $w={445}>5546 N. Lecanto Hwy., Beverly Hills, FL 34465</Label></ContactLine>
            <ContactLine><Label {...bold} $w={151}>Phone Number:</Label><Label $ml={9} $font={geo} $size={20} $w={155} $color="#f0502f">(352) 513-8096</Label></ContactLine>
          </ContactLines>
        </FooterColumn>
        <FooterColumn $w={300}>
          <Label {...head} $w={158}>Social Media</Label>
          <Social>
            <Slot $w={56} $r={28} $bg="#617bc5"><FaFacebookF size={26} /></Slot>
            <Slot $w={56} $r={28} $bg="#d45540"><FaGooglePlusG size={37} /></Slot>
            <Slot $w={56} $r={28} $bg="#b83a2b"><FaYelp size={27} /></Slot>
          </Social>
        </FooterColumn>
      </FooterColumns>
      <FooterBase>
        <Label {...thin} $w={127} $line={21} $rule>Image Credits</Label>
        <Label {...thin} $w={602} $ml={482} $color="#3c3c3c">5546 N. Lecanto Hwy. Beverly Hills, FL 34465 (352) 527-0440</Label>
        <Spacer />
        <Label $font={arial} $size={16.5} $w={167} $color="#a3b93e">WEBSITE BY KUKUI</Label>
      </FooterBase>
      <Accessible><FaAccessibleIcon size={42} /></Accessible>
    </SiteFooter>
  );
}

function Downloads() {
  return (
    <DownloadBar>
      {downloads.map(([t, w]) => (
        <Download key={t}>
          <JpegFile kind={t.endsWith("png") ? "PNG" : "JPEG"} />
          <DownloadName><Label $size={28} $w={w}>{t}</Label></DownloadName>
          <Chevron />
        </Download>
      ))}
      <ShowAll><Label $size={24} $w={92}>Show All</Label></ShowAll>
      <Slot $w={28} $ml={22} $color="#c5c7ca"><svg width="19" height="19"><path d="M1.5 1.5L17.5 17.5M17.5 1.5L1.5 17.5" stroke="currentColor" strokeWidth="2.4" /></svg></Slot>
    </DownloadBar>
  );
}

export default function App() {
  return (
    <Desktop>
      <Global />
      <Hexagons />
      <Screen>
        <TopMenu />
        <Workspace>
          <div />
          <Window>
            <BrowserHead />
            <Page>
              <WaybackBanner />
              <Site />
              <Footer />
            </Page>
            <Downloads />
          </Window>
          <Files>
            {files.map((f, i) => (
              <FileItem key={i} $empty={!f}>
                <Thumb />
                {f && <FileLabel $w={28}>ot</FileLabel>}
                {f && <FileLabel $w={f[1]}>{f[0]}</FileLabel>}
              </FileItem>
            ))}
          </Files>
        </Workspace>
      </Screen>
    </Desktop>
  );
}
